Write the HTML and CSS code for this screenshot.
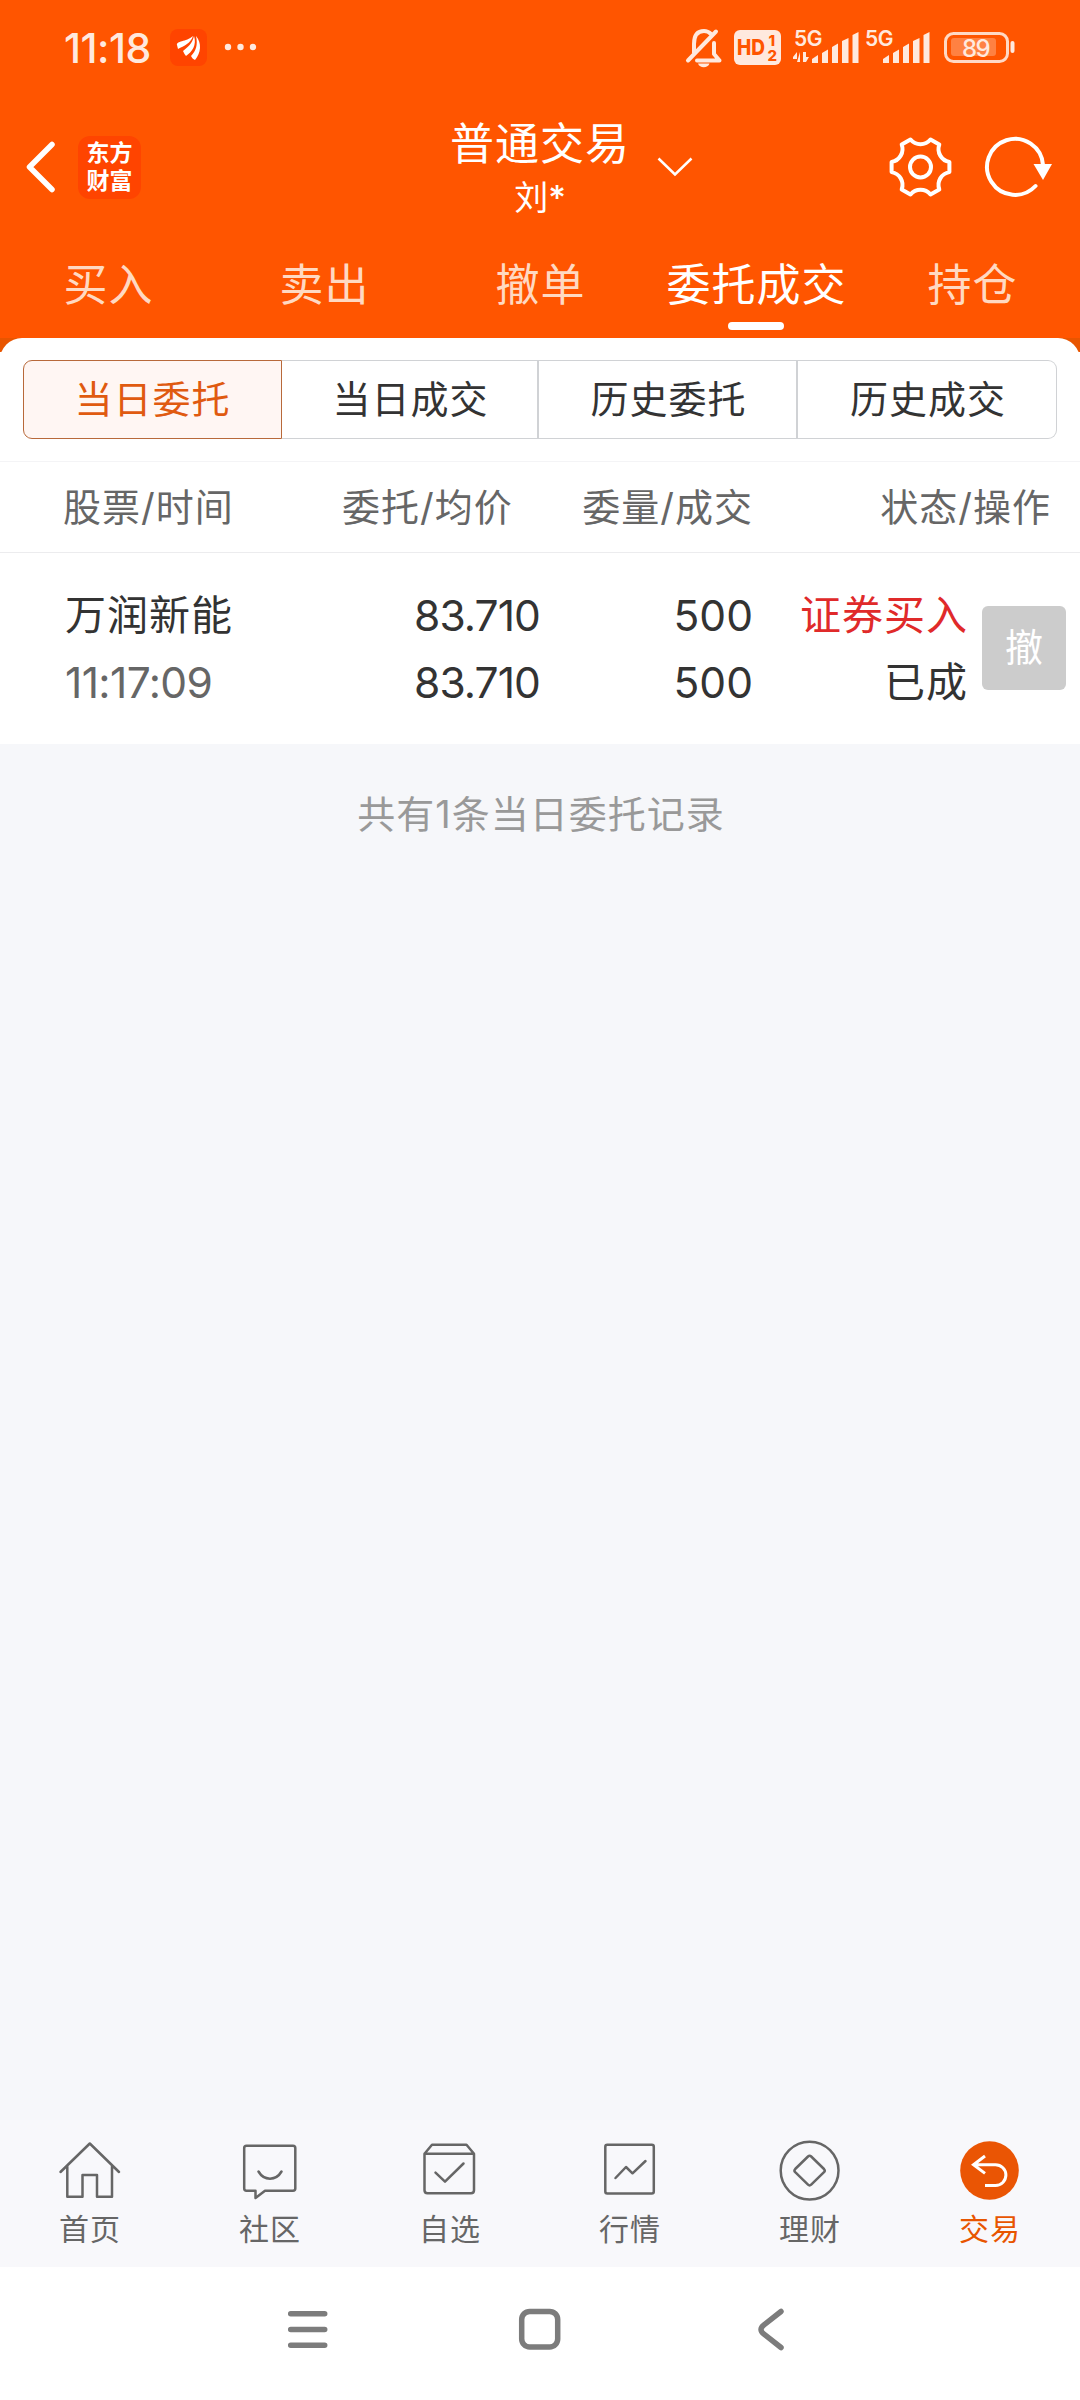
FILE: index.html
```html
<!DOCTYPE html>
<html lang="zh-CN">
<head>
<meta charset="utf-8">
<title>普通交易</title>
<link rel="stylesheet" href="styles.css">
</head>
<body>
<div class="screen">
  <header class="top">
    <div class="status">
      <span class="clock">11:18</span>
      <svg class="status-left" viewBox="168 20 100 54">
        <rect x="170" y="29" width="37" height="37" rx="8" fill="#ff4400"/>
        <g fill="#fff">
          <path d="M177 45C176 41 186 42 193 36C191 43 184 46 178 49Z"/>
          <path d="M183 51C188 47 192 44 194 36C197 45 192 52 186 56C185 55 184 53 183 51Z"/>
          <path d="M191 56C196 51 198 45 196 36C202 43 201 53 195 60C193 59 192 58 191 56Z"/>
        </g>
        <g fill="#ffe9de"><circle cx="228" cy="47" r="3.2"/><circle cx="240.500" cy="47" r="3.200"/><circle cx="253" cy="47" r="3.200"/></g>
      </svg>
      <svg class="status-right" viewBox="680 20 340 54">
        <g fill="none" stroke="#ffe9de" stroke-width="4" stroke-linecap="round" stroke-linejoin="round">
          <path d="M694 53V44C694 35 698 31 704 31C707 31 709 32 711 34M716 31.500L688 60.500M697 60.500H719.500L714 54V43"/>
        </g>
        <path d="M698 63.500H709.500C708 68.500 699.500 68.500 698 63.500Z" fill="#ffe9de"/>
        <rect x="734" y="30" width="47" height="35" rx="6" fill="#ffe9de"/>
        <text class="hd" x="737" y="55" textLength="28" lengthAdjust="spacingAndGlyphs">HD</text>
        <text class="hd-num" x="768.500" y="45.500">1</text>
        <text class="hd-num" x="767.500" y="61">2</text>
        <g fill="#ffe9de">
          <text class="net" x="794" y="45.500" textLength="28.500">5G</text>
          <text class="net" x="865" y="45.500" textLength="28.500">5G</text>
          <path d="M797 62V52L793 57V59H797V62H800V52ZM803 52H806V57H809L806 62H803Z"/>
          <path d="M812 63V59L818 55V63ZM822 63V53L828 49.500V63ZM832 63V47L838 43.500V63ZM842 63V41L848.500 38V63ZM852.500 63V35L858.500 32V63Z"/>
          <path d="M883 63V59L889 55V63ZM893 63V53L899 49.500V63ZM903 63V47L909 43.500V63ZM913 63V41L919.500 38V63ZM923.500 63V35L929.500 32V63Z"/>
          <rect x="1010.500" y="41" width="4" height="12" rx="2"/>
        </g>
        <rect x="945.500" y="33.500" width="62" height="28" rx="8" fill="none" stroke="#ffd9c5" stroke-width="3"/>
        <rect x="951" y="38" width="45" height="18" rx="3" fill="#ff8142"/>
        <text class="battery" x="962" y="57" textLength="28.500">89</text>
      </svg>
    </div>
    <div class="bar">
      <svg class="bar-left" viewBox="20 130 58 76"><path d="M52 145.500L29.500 168L52 190.500" fill="none" stroke="#fff" stroke-width="5.500" stroke-linecap="round" stroke-linejoin="round"/></svg>
      <div class="brand"><span>东方</span><span>财富</span></div>
      <div class="title">
        <div class="title-main">普通交易</div>
        <div class="title-sub">刘<b>*</b></div>
      </div>
      <svg class="chevron" viewBox="655 152 40 30"><path d="M658.500 158.500L675 174.500L691.500 158.500" fill="none" stroke="#fff" stroke-width="2.500"/></svg>
      <svg class="bar-right" viewBox="880 129 180 76">
        <g fill="none" stroke="#fff" stroke-width="4" stroke-linejoin="round" stroke-linecap="round">
          <path transform="translate(920.500 167)" d="M10 -27.500L18.800 -22.400A13 13 0 0 0 28.900 -5.100V5.100A13 13 0 0 0 18.800 22.400L10 27.500A13 13 0 0 0 -10 27.500L-18.800 22.400A13 13 0 0 0 -28.900 5.100V-5.100A13 13 0 0 0 -18.800 -22.400L-10 -27.500A13 13 0 0 0 10 -27.500Z"/>
          <circle cx="920.500" cy="167" r="10.500"/>
          <path d="M1035.500 186A28 28 0 1 1 1043 165"/>
        </g>
        <path d="M1033.500 164H1052L1043 180Z" fill="#fff"/>
      </svg>
    </div>
    <nav class="tabs">
      <span>买入</span><span>卖出</span><span>撤单</span><span class="on">委托成交</span><span>持仓</span>
    </nav>
  </header>

  <div class="sheet-back">
    <div class="sheet">
      <div class="segments">
        <span class="on">当日委托</span><span>当日成交</span><span>历史委托</span><span>历史成交</span>
      </div>
    </div>
  </div>

  <div class="cols">
    <span>股票/时间</span><span class="r">委托/均价</span><span class="r">委量/成交</span><span class="r">状态/操作</span>
  </div>

  <div class="order">
    <div><p>万润新能</p><p class="time">11:17:09</p></div>
    <div class="r"><p class="num">83.710</p><p class="num">83.710</p></div>
    <div class="r"><p class="num qty">500</p><p class="num qty">500</p></div>
    <div class="r"><p class="buy">证券买入</p><p>已成</p></div>
    <button class="cancel">撤</button>
  </div>

  <main class="note">共有1条当日委托记录</main>

  <nav class="dock">
    <div class="item">
      <svg viewBox="50 2136 80 68"><path d="M60.500 2172L89.800 2143.500L119 2172M67.300 2166.500V2196.700H82.500V2175H97V2196.700H112V2166.500"/></svg>
      <span>首页</span>
    </div>
    <div class="item">
      <svg viewBox="230 2136 80 68"><path d="M246.500 2145.700H293Q295.300 2145.700 295.300 2148V2188.500Q295.300 2190.700 293 2190.700H265L255.500 2198V2190.700H246.500Q244.200 2190.700 244.200 2188.500V2148Q244.200 2145.700 246.500 2145.700ZM258.500 2171.500C264 2181 276 2181 281.500 2171.500"/></svg>
      <span>社区</span>
    </div>
    <div class="item">
      <svg viewBox="410 2136 80 68"><path d="M424.500 2153.700H474V2190.300Q474 2193.300 471 2193.300H427.500Q424.500 2193.300 424.500 2190.300V2153.700L432 2144.800H466.500L474 2153.700M435.500 2172.700L445 2181.700L463.500 2163.500"/></svg>
      <span>自选</span>
    </div>
    <div class="item">
      <svg viewBox="590 2136 80 68"><rect x="605.300" y="2144.700" width="48.500" height="48.800" rx="2"/><path d="M615.500 2178L626 2167L632.500 2173.300L645.500 2161"/></svg>
      <span>行情</span>
    </div>
    <div class="item">
      <svg viewBox="770 2136 80 68"><circle cx="809.600" cy="2170.600" r="28.900"/><path d="M808 2156.500Q809.600 2155 811.200 2156.500L824 2169Q825.500 2170.600 824 2172.200L811.200 2184.700Q809.600 2186.200 808 2184.700L795.200 2172.200Q793.700 2170.600 795.200 2169Z"/></svg>
      <span>理财</span>
    </div>
    <div class="item on">
      <svg viewBox="950 2136 80 68"><circle class="disc" cx="989.500" cy="2170.500" r="29.300"/><path class="arrow" d="M985 2156L973.500 2164.700L985 2173.400M973.500 2164.700H995.500A10.400 10.400 0 0 1 995.500 2185.500H985"/></svg>
      <span>交易</span>
    </div>
  </nav>

  <div class="system">
    <svg viewBox="280 2303 500 54" fill="none" stroke="#7c7c7c" stroke-width="5.500" stroke-linecap="round" stroke-linejoin="round">
      <path d="M290.700 2313.700H324.700M290.700 2329.500H324.700M290.700 2345.300H324.700"/>
      <rect x="521.700" y="2311.400" width="36" height="35.600" rx="8"/>
      <path d="M781 2311.500L764 2324.800Q758 2329.500 764 2334.200L781 2347.500"/>
    </svg>
  </div>
</div>
</body>
</html>
```
FILE: styles.css
```css
* { box-sizing: border-box; }
body {
  margin: 0;
  font-family: Inter, "Noto Sans CJK SC", sans-serif;
  color: #333;
}
p { margin: 0; }
svg { display: block; flex: none; overflow: visible; }
.screen {
  width: 1080px;
  height: 2400px;
  display: flex;
  flex-direction: column;
  background: #f6f7fa;
  overflow: hidden;
}

/* header */
.top { height: 338px; background: #ff5500; color: #fff; }
.status { height: 94px; display: flex; align-items: center; padding-left: 64px; }
.clock {
  width: 104px;
  font-size: 41px;
  font-weight: 500;
  line-height: 54px;
  letter-spacing: -0.5px;
  color: #ffe9de;
  padding-top: 2px;
}
.status-left { width: 100px; height: 54px; }
.status-right { width: 340px; height: 54px; margin-left: 412px; }
.hd { font-size: 22px; font-weight: 800; fill: #ff5500; }
.hd-num { font-size: 15px; font-weight: 800; fill: #ff5500; }
.net { font-size: 21px; font-weight: 600; }
.battery { font-size: 24px; font-weight: 500; fill: #ffe9de; }

.bar { height: 146px; display: flex; align-items: center; padding: 0 20px; }
.bar-left { width: 58px; height: 76px; }
.brand {
  width: 63px;
  height: 63px;
  border-radius: 12px;
  background: #ff4400;
  display: flex;
  flex-direction: column;
  align-items: center;
  justify-content: center;
  font-size: 23px;
  font-weight: 700;
  line-height: 28px;
}
.title { width: 240px; margin-left: 279px; padding-top: 2px; text-align: center; }
.title-main { font-size: 44px; line-height: 60px; letter-spacing: 1px; }
.title-sub { font-size: 34px; line-height: 48px; }
.title-sub b { font-weight: 500; font-size: 34px; }
.chevron { width: 40px; height: 30px; margin-left: -5px; }
.bar-right { width: 180px; height: 76px; margin-left: 185px; }

.tabs { height: 98px; display: grid; grid-template-columns: repeat(5, 216px); }
.tabs span {
  height: 90px;
  font-size: 44px;
  letter-spacing: 1px;
  line-height: 90px;
  text-align: center;
  padding-left: 1px;
  color: #ffd9c2;
}
.tabs .on { color: #fff; display: flex; flex-direction: column; align-items: center; }
.tabs .on::after { content: ""; flex: none; width: 56px; height: 8px; border-radius: 4px; background: #fff; margin: -8px 1px 0 0; }

/* sheet */
.sheet-back { height: 124px; background: linear-gradient(#e85500 14px, #fff 14px); }
.sheet {
  height: 124px;
  padding: 22px 23px 0;
  background: #fff;
  border-radius: 22px 22px 0 0;
  border-bottom: 1px solid #f4f4f6;
}
.segments { height: 79px; display: grid; grid-template-columns: 259px 257px 259px 259px; }
.segments span {
  border: 1px solid #d0d2d5;
  border-left-width: 0;
  border-right-width: 2px;
  font-size: 38px;
  letter-spacing: 1px;
  line-height: 76px;
  text-align: center;
  padding-left: 2px;
}
.segments span:last-child { border-right-width: 1px; border-radius: 0 9px 9px 0; }
.segments .on { border: 1px solid #b8693a; border-radius: 9px 0 0 9px; background: #fff6f3; color: #e05a10; padding-left: 0; }

/* table */
.cols {
  height: 91px;
  display: grid;
  grid-template-columns: 279px 168px 243px 298px;
  padding-left: 63px;
  background: #fff;
  border-bottom: 1px solid #ececee;
  font-size: 38px;
  letter-spacing: 1px;
  line-height: 90px;
  color: #666;
  white-space: nowrap;
}
.r { text-align: right; }
.order {
  height: 191px;
  display: grid;
  grid-template-columns: 280px 195px 213px 215px 84px;
  padding: 29px 0 0 65px;
  background: #fff;
  font-size: 41px;
  letter-spacing: 1px;
  line-height: 67px;
  white-space: nowrap;
}
.num, .time { font-size: 42.5px; letter-spacing: -0.9px; }
.time { color: #666; letter-spacing: -0.6px; }
.qty { letter-spacing: 0; }
.buy { color: #e02a2a; }
.cancel {
  width: 84px;
  height: 84px;
  margin: 24px 0 0 14px;
  padding: 0 0 2px;
  border: 0;
  border-radius: 6px;
  background: #ccc;
  color: #fff;
  font: inherit;
  font-size: 38px;
  letter-spacing: 0;
}
.note {
  flex: 1;
  padding: 40px 0 0 2px;
  text-align: center;
  font-size: 38px;
  letter-spacing: 1px;
  line-height: 60px;
  color: #999;
}

/* bottom bars */
.dock { height: 147px; display: grid; grid-template-columns: repeat(6, 180px); background: #f8f8fb; }
.item { display: flex; flex-direction: column; align-items: center; padding-top: 16px; font-size: 30px; letter-spacing: 1px; line-height: 50px; color: #666; }
.item svg { width: 80px; height: 68px; fill: none; stroke: #666; stroke-width: 2.500; stroke-linecap: round; stroke-linejoin: round; }
.item.on { color: #e85500; }
.item .disc { fill: #ea5504; stroke: none; }
.item .arrow { stroke: #fff; stroke-width: 3; stroke-linecap: butt; stroke-linejoin: miter; }
.system { height: 133px; background: #fff; padding: 36px 0 0 280px; }
.system svg { width: 500px; height: 54px; }
```
